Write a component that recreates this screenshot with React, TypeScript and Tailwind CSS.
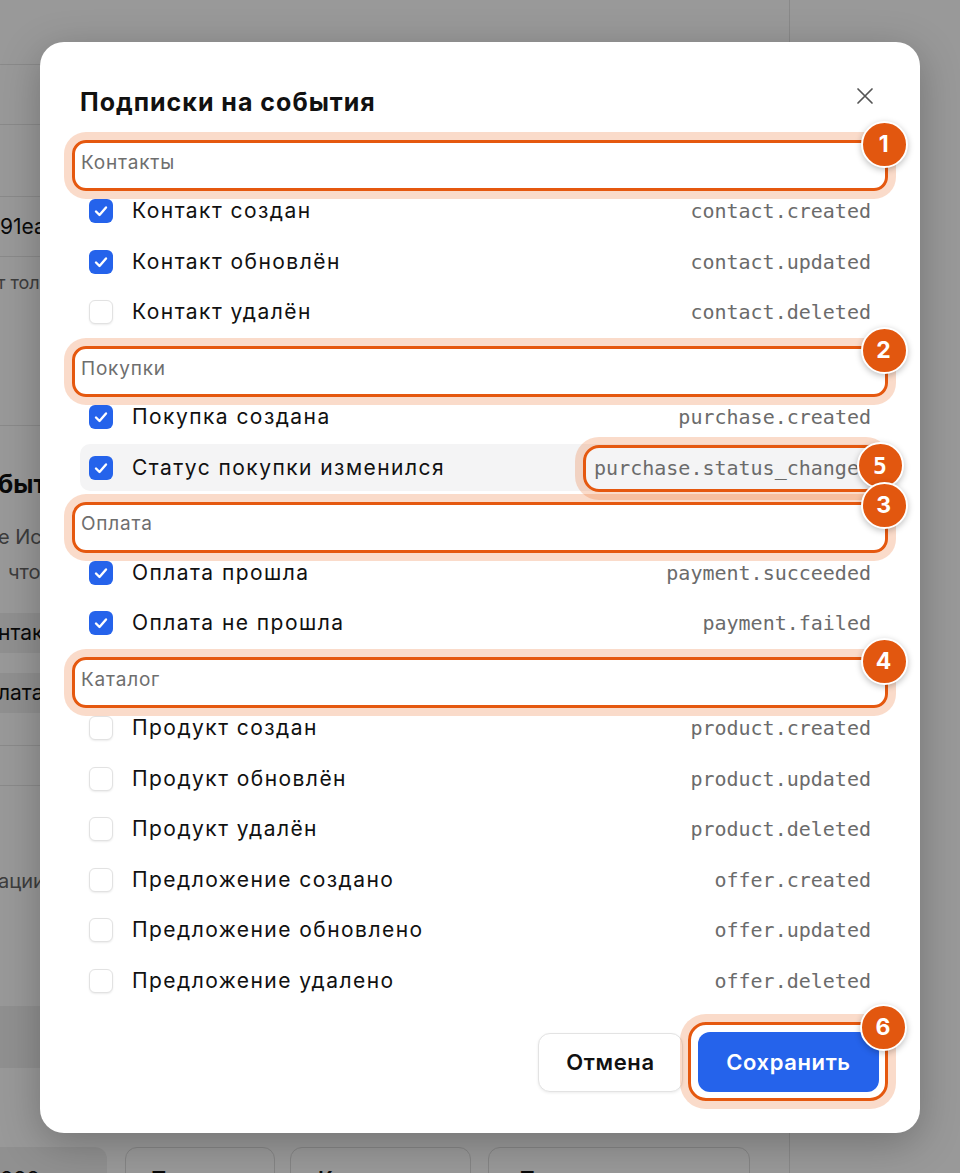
import React from 'react';

type Item = {
  label: string;
  code: string;
  checked: boolean;
  hover?: boolean;
  mark?: number;
};

type Section = {
  title: string;
  badge: number;
  items: Item[];
};

const sections: Section[] = [
  {
    title: 'Контакты',
    badge: 1,
    items: [
      { label: 'Контакт создан', code: 'contact.created', checked: true },
      { label: 'Контакт обновлён', code: 'contact.updated', checked: true },
      { label: 'Контакт удалён', code: 'contact.deleted', checked: false },
    ],
  },
  {
    title: 'Покупки',
    badge: 2,
    items: [
      { label: 'Покупка создана', code: 'purchase.created', checked: true },
      {
        label: 'Статус покупки изменился',
        code: 'purchase.status_changed',
        checked: true,
        hover: true,
        mark: 5,
      },
    ],
  },
  {
    title: 'Оплата',
    badge: 3,
    items: [
      { label: 'Оплата прошла', code: 'payment.succeeded', checked: true },
      { label: 'Оплата не прошла', code: 'payment.failed', checked: true },
    ],
  },
  {
    title: 'Каталог',
    badge: 4,
    items: [
      { label: 'Продукт создан', code: 'product.created', checked: false },
      { label: 'Продукт обновлён', code: 'product.updated', checked: false },
      { label: 'Продукт удалён', code: 'product.deleted', checked: false },
      { label: 'Предложение создано', code: 'offer.created', checked: false },
      { label: 'Предложение обновлено', code: 'offer.updated', checked: false },
      { label: 'Предложение удалено', code: 'offer.deleted', checked: false },
    ],
  },
];

function Badge({ n, className }: { n: number; className: string }) {
  return (
    <div
      className={`absolute flex h-[47px] w-[47px] items-center justify-center rounded-full border-2 border-white bg-[#e2570f] text-[23px] font-bold text-white shadow-[0_2px_6px_rgba(0,0,0,0.25)] ${className}`}
    >
      {n}
    </div>
  );
}

function Checkbox({ checked }: { checked: boolean }) {
  if (checked) {
    return (
      <span className="flex h-[24px] w-[24px] shrink-0 items-center justify-center rounded-[6px] bg-[#2563eb]">
        <svg width="24" height="24" viewBox="0 0 24 24" fill="none">
          <polyline
            points="7,12.5 10.5,16 17,8.5"
            stroke="white"
            strokeWidth="2.4"
            strokeLinecap="round"
            strokeLinejoin="round"
          />
        </svg>
      </span>
    );
  }
  return (
    <span className="h-[24px] w-[24px] shrink-0 rounded-[6px] border border-[#e2e2e2] bg-white shadow-[0_1px_2px_rgba(0,0,0,0.08)]" />
  );
}

function Row({ item }: { item: Item }) {
  return (
    <div
      className={`flex h-[47px] items-center rounded-[10px] px-[9px] ${item.hover ? 'bg-[#f4f4f5]' : ''}`}
    >
      <Checkbox checked={item.checked} />
      <span className="ml-[19px] text-[21px] leading-[24px] tracking-[1.45px] text-[#111]">{item.label}</span>
      <span className="relative ml-auto font-['DejaVu_Sans_Mono',monospace] text-[20px] leading-[24px] text-[#6b6b6b]">
        {item.code}
        {item.mark && (
          <>
            <span className="absolute -top-[10.5px] -bottom-[12.5px] -left-[11px] -right-[11px] rounded-[16px] border-[3px] border-[#e5580f] shadow-[0_0_0_8px_rgba(232,89,12,0.22)]" />
            <Badge n={item.mark} className="-top-[13.5px] -right-[32.5px]" />
          </>
        )}
      </span>
    </div>
  );
}

function SectionBlock({ section }: { section: Section }) {
  return (
    <div className="flex flex-col">
      <div className="relative flex h-[28px] items-center pl-[1px] text-[19px] tracking-[0.8px] text-[#6e6e6e]">
        {section.title}
        <div className="absolute -top-[9px] -bottom-[14px] -left-[8px] -right-[8px] rounded-[14px] border-[3px] border-[#e5580f] shadow-[0_0_0_8px_rgba(232,89,12,0.22)]">
          <Badge n={section.badge} className="-top-[22.5px] -right-[22.5px]" />
        </div>
      </div>
      <div className="mt-[10.5px] flex flex-col gap-[3.6px]">
        {section.items.map((item) => (
          <Row key={item.code} item={item} />
        ))}
      </div>
    </div>
  );
}

function BackgroundPage() {
  return (
    <div className="flex min-h-[1173px] w-[790px] flex-col border-r border-[#e5e5e5]">
      <div className="h-[65px] border-b border-[#e6e6e6]" />
      <div className="h-[60px] border-b border-[#e6e6e6]" />
      <div className="h-[72px] border-b border-[#e6e6e6]" />
      <div className="flex h-[60px] items-center border-b border-[#e6e6e6] text-[21px] text-[#111]">
        91ea7c3f-0b2d-4e58
      </div>
      <div className="mt-[16px] -ml-[3px] whitespace-nowrap text-[18px] leading-[20px] text-[#666]">
        т только при создании
      </div>
      <div className="mt-[132px] border-b border-[#e6e6e6]" />
      <div className="mt-[44px] -ml-[2px] text-[25px] font-bold leading-[28px] text-[#111]">бытия</div>
      <div className="mt-[27px] -ml-[2px] text-[20px] leading-[24px] text-[#666]">е Источник</div>
      <div className="mt-[11px] pl-[8px] text-[20px] leading-[24px] text-[#666]">что</div>
      <div className="mt-[29px] -ml-[2px] flex h-[40px] w-[160px] items-center rounded-r-[10px] bg-[#f1f1f1] text-[21px] text-[#111]">
        нтакты
      </div>
      <div className="mt-[20px] -ml-[2px] flex h-[40px] w-[160px] items-center rounded-r-[10px] bg-[#f1f1f1] text-[21px] text-[#111]">
        лата
      </div>
      <div className="mt-[32px] border-b border-[#e6e6e6]" />
      <div className="mt-[39px] border-b border-[#e6e6e6]" />
      <div className="mt-[83px] -ml-[2px] text-[20px] leading-[24px] text-[#666]">ации</div>
      <div className="mt-[113px] h-[62px] bg-[#f1f1f1]" />
      <div className="mt-[79px] flex items-start">
        <div className="flex h-[60px] w-[107px] rounded-r-[12px] bg-[#f1f1f1] pt-[16px] text-[22px] leading-[24px] text-[#111]">
          ооо
        </div>
        <div className="ml-[18px] flex h-[60px] w-[150px] justify-center rounded-[12px] border border-[#dedede] pt-[16px] text-[21px] font-semibold text-[#111]">
          Показать
        </div>
        <div className="ml-[15px] flex h-[60px] w-[181px] justify-center rounded-[12px] border border-[#dedede] pt-[16px] text-[21px] font-semibold text-[#111]">
          Копировать
        </div>
        <div className="ml-[17px] flex h-[60px] w-[262px] justify-center rounded-[12px] border border-[#dedede] pt-[16px] text-[21px] font-semibold text-[#111]">
          Перегенерировать
        </div>
      </div>
    </div>
  );
}

export default function App() {
  return (
    <div className="relative h-[1173px] w-[960px] overflow-hidden bg-white font-[Inter,'Noto_Sans',sans-serif]">
      <BackgroundPage />
      <div className="absolute inset-0 bg-black/40" />

      <div className="absolute left-[40px] top-[42px] flex w-[880px] flex-col rounded-[24px] bg-white px-10 pt-[44px] pb-[41px] shadow-[0_10px_40px_rgba(0,0,0,0.25)]">
        <div className="flex h-[32px] items-start justify-between">
          <h2 className="text-[25px] font-bold leading-[32px] tracking-[1px] text-[#111]">Подписки на события</h2>
          <button className="mt-[1px] mr-[6px] text-[#555]">
            <svg width="18" height="18" viewBox="0 0 18 18" fill="none">
              <path d="M2 2L16 16M16 2L2 16" stroke="currentColor" strokeWidth="1.7" strokeLinecap="round" />
            </svg>
          </button>
        </div>

        <div className="mt-[31px] flex flex-col gap-[19.4px]">
          {sections.map((s) => (
            <SectionBlock key={s.title} section={s} />
          ))}
        </div>

        <div className="mt-[27.8px] flex items-center justify-end gap-[15px] pr-[1px]">
          <button className="h-[59px] w-[145px] rounded-[12px] border border-[#e3e3e3] bg-white text-[22px] font-semibold tracking-[0.6px] text-[#111] shadow-[0_1px_3px_rgba(0,0,0,0.08)]">
            Отмена
          </button>
          <div className="relative">
            <button className="h-[60px] w-[181px] rounded-[12px] bg-[#2563eb] text-[22px] font-semibold tracking-[0.6px] text-white">
              Сохранить
            </button>
            <div className="absolute -top-[10px] -bottom-[9px] -left-[10px] -right-[9px] rounded-[18px] border-[3px] border-[#e5580f] shadow-[0_0_0_8px_rgba(232,89,12,0.22)]">
              <Badge n={6} className="-top-[21.5px] -right-[21.5px]" />
            </div>
          </div>
        </div>
      </div>
    </div>
  );
}
